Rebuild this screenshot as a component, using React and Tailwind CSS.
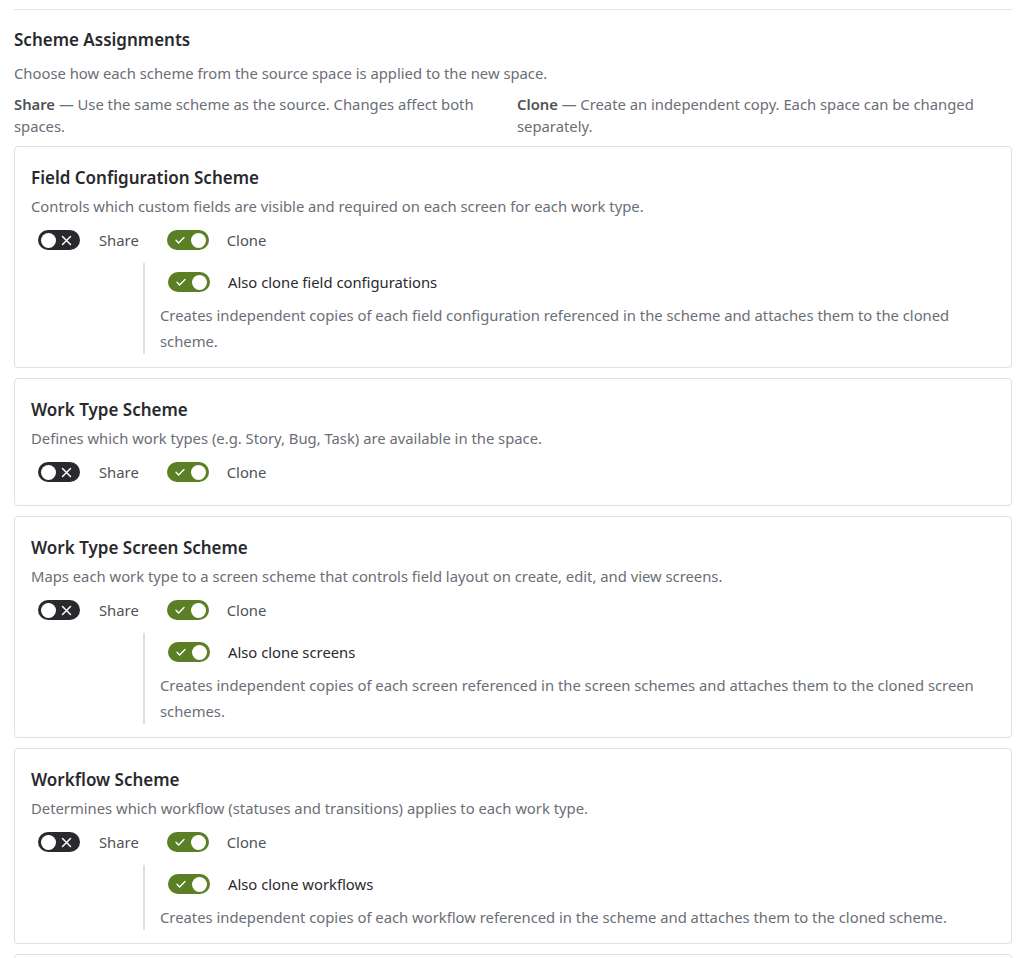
const schemes = [
  {
    title: "Field Configuration Scheme",
    description: "Controls which custom fields are visible and required on each screen for each work type.",
    nested: {
      label: "Also clone field configurations",
      text: "Creates independent copies of each field configuration referenced in the scheme and attaches them to the cloned scheme.",
    },
  },
  {
    title: "Work Type Scheme",
    description: "Defines which work types (e.g. Story, Bug, Task) are available in the space.",
  },
  {
    title: "Work Type Screen Scheme",
    description: "Maps each work type to a screen scheme that controls field layout on create, edit, and view screens.",
    nested: {
      label: "Also clone screens",
      text: "Creates independent copies of each screen referenced in the screen schemes and attaches them to the cloned screen schemes.",
    },
  },
  {
    title: "Workflow Scheme",
    description: "Determines which workflow (statuses and transitions) applies to each work type.",
    nested: {
      label: "Also clone workflows",
      text: "Creates independent copies of each workflow referenced in the scheme and attaches them to the cloned scheme.",
    },
  },
];

function Toggle({ on, className = "" }) {
  if (on) {
    return (
      <span className={`relative flex items-center w-[42px] h-5 rounded-full bg-[#5b7f24] shrink-0 ${className}`}>
        <svg className="absolute left-[7px]" width="12" height="12" viewBox="0 0 12 12" fill="none">
          <path d="M2 6.3l2.6 2.6L10 3.4" stroke="white" strokeWidth="1.4" strokeLinecap="round" strokeLinejoin="round" />
        </svg>
        <span className="absolute right-[3px] w-[15px] h-[15px] rounded-full bg-white" />
      </span>
    );
  }
  return (
    <span className={`relative flex items-center w-[42px] h-5 rounded-full bg-[#292a2e] shrink-0 ${className}`}>
      <span className="absolute left-[3px] w-[15px] h-[15px] rounded-full bg-white" />
      <svg className="absolute right-[8px]" width="11" height="11" viewBox="0 0 11 11" fill="none">
        <path d="M1.5 1.5l8 8M9.5 1.5l-8 8" stroke="white" strokeWidth="1.5" strokeLinecap="round" />
      </svg>
    </span>
  );
}

function SchemeCard({ scheme }) {
  return (
    <div className="border border-[#dcdfe4] rounded-[4px] px-4 pt-[19px] pb-[13px]">
      <h4 className="text-[17px] leading-6 font-semibold text-[#292a2e]">{scheme.title}</h4>
      <p className="mt-1 text-[14.8px] leading-6 text-[#6b6e76]">{scheme.description}</p>
      <div className="mt-[10px] flex items-center h-6 ml-[7px] text-[14.8px] text-[#505258]">
        <Toggle on={false} />
        <span className="ml-[19px]">Share</span>
        <Toggle on={true} className="ml-[28px]" />
        <span className="ml-[18px]">Clone</span>
      </div>
      {scheme.nested ? (
        <div className="mt-[11px] ml-[112px] border-l-2 border-[#dddee1] pl-[15px] pt-[7px]">
          <div className="flex items-center h-6 ml-[8px]">
            <Toggle on={true} />
            <span className="ml-[18px] text-[14.8px] text-[#292a2e]">{scheme.nested.label}</span>
          </div>
          <p className="mt-2 text-[14.8px] leading-[26px] text-[#6b6e76]">{scheme.nested.text}</p>
        </div>
      ) : (
        <div className="h-2" />
      )}
    </div>
  );
}

export default function App() {
  return (
    <div className="bg-white min-h-screen pl-[14px] pr-[12px] pt-[9px] font-['Noto_Sans',sans-serif]">
      <div className="border-t border-[#e2e3e6]">
        <h3 className="mt-[18px] text-[17px] leading-6 font-semibold text-[#292a2e]">Scheme Assignments</h3>
        <p className="mt-[10px] text-[14.8px] leading-[22px] text-[#6b6e76]">
          Choose how each scheme from the source space is applied to the new space.
        </p>
        <div className="mt-[9px] grid grid-cols-2 gap-[8px] text-[14.8px] leading-[22px] text-[#6b6e76]">
          <p>
            <b className="font-semibold text-[#505258]">Share</b> — Use the same scheme as the source. Changes affect both spaces.
          </p>
          <p>
            <b className="font-semibold text-[#505258]">Clone</b> — Create an independent copy. Each space can be changed separately.
          </p>
        </div>
        <div className="mt-[9px] flex flex-col gap-[10px]">
          {schemes.map((s) => (
            <SchemeCard key={s.title} scheme={s} />
          ))}
          <div className="border border-[#dcdfe4] rounded-[4px] h-10" />
        </div>
      </div>
    </div>
  );
}
